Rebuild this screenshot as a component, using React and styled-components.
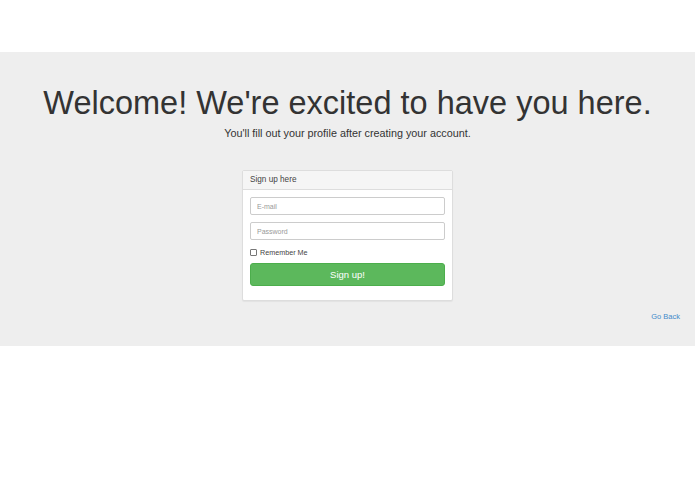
import React from "react";
import styled, { createGlobalStyle } from "styled-components";

const GlobalStyle = createGlobalStyle`
  html, body {
    margin: 0;
    padding: 0;
    background: #ffffff;
    font-family: "Liberation Sans", Arial, Helvetica, sans-serif;
    color: #333333;
  }
`;

const Page = styled.div`
  padding-top: 52px;
`;

const Jumbotron = styled.section`
  background: #eeeeee;
  height: 294px;
  box-sizing: border-box;
  padding: 33px 15px 0;
  display: flex;
  flex-direction: column;
  align-items: center;
`;

const Title = styled.h1`
  margin: 0;
  font-size: 32.5px;
  font-weight: 400;
  line-height: 36px;
  color: #333333;
  text-align: center;
  white-space: nowrap;
`;

const Lead = styled.p`
  margin: 5px 0 0;
  font-size: 10.8px;
  line-height: 14px;
  color: #333333;
  text-align: center;
`;

const Panel = styled.div`
  margin-top: 30px;
  width: 211px;
  background: #ffffff;
  border: 1px solid #dddddd;
  border-radius: 2px;
  box-sizing: border-box;
  box-shadow: 0 1px 1px rgba(0, 0, 0, 0.05);
`;

const PanelHeading = styled.div`
  background: #f5f5f5;
  border-bottom: 1px solid #dddddd;
  padding: 3px 7px;
  font-size: 8.2px;
  line-height: 12px;
  color: #444444;
`;

const PanelBody = styled.form`
  padding: 7px 7px 14px;
  display: flex;
  flex-direction: column;
`;

const Input = styled.input`
  height: 18px;
  box-sizing: border-box;
  border: 1px solid #cccccc;
  border-radius: 2px;
  padding: 0 6px;
  font-family: inherit;
  font-size: 7px;
  color: #555555;
  background: #ffffff;
  margin-bottom: 7px;
  outline: none;

  &::placeholder {
    color: #999999;
  }
`;

const CheckRow = styled.label`
  display: flex;
  align-items: center;
  gap: 3px;
  height: 10px;
  font-size: 7.2px;
  color: #444444;
`;

const Box = styled.span`
  width: 5px;
  height: 5px;
  border: 1px solid #777777;
  border-radius: 1px;
  background: #ffffff;
`;

const Button = styled.button`
  margin-top: 6px;
  height: 23px;
  border: 1px solid #4cae4c;
  border-radius: 3px;
  background: #5cb85c;
  color: #ffffff;
  font-family: inherit;
  font-size: 9.5px;
  font-weight: 400;
`;

const Footer = styled.div`
  align-self: stretch;
  display: flex;
  justify-content: flex-end;
  margin-top: 11px;
  line-height: 10px;
`;

const Link = styled.a`
  font-size: 7.5px;
  color: #428bca;
  text-decoration: none;
`;

export default function App() {
  return (
    <Page>
      <GlobalStyle />
      <Jumbotron>
        <Title>Welcome! We're excited to have you here.</Title>
        <Lead>You'll fill out your profile after creating your account.</Lead>
        <Panel>
          <PanelHeading>Sign up here</PanelHeading>
          <PanelBody onSubmit={(e) => e.preventDefault()}>
            <Input type="email" placeholder="E-mail" />
            <Input type="password" placeholder="Password" />
            <CheckRow>
              <Box />
              Remember Me
            </CheckRow>
            <Button type="submit">Sign up!</Button>
          </PanelBody>
        </Panel>
        <Footer>
          <Link href="#">Go Back</Link>
        </Footer>
      </Jumbotron>
    </Page>
  );
}
